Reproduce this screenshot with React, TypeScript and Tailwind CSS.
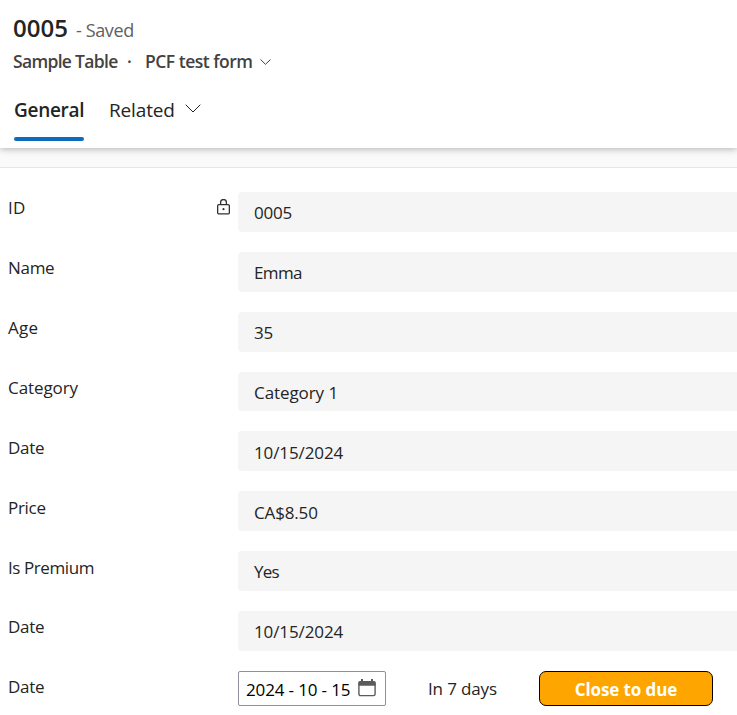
import React from "react";

type Field = { label: string; value: string; locked?: boolean; labelClass: string; valueClass: string };

const fields: Field[] = [
  { label: "ID", value: "0005", locked: true, labelClass: "tracking-[0.2px]", valueClass: "tracking-[-0.25px]" },
  { label: "Name", value: "Emma", labelClass: "tracking-[-0.3px]", valueClass: "tracking-[-0.6px]" },
  { label: "Age", value: "35", labelClass: "tracking-[0.2px]", valueClass: "tracking-[-0.25px]" },
  { label: "Category", value: "Category 1", labelClass: "tracking-[-0.08px]", valueClass: "tracking-[-0.08px]" },
  { label: "Date", value: "10/15/2024", labelClass: "tracking-[-0.3px]", valueClass: "tracking-[-0.1px]" },
  { label: "Price", value: "CA$8.50", labelClass: "tracking-[-0.3px]", valueClass: "tracking-[-0.15px]" },
  { label: "Is Premium", value: "Yes", labelClass: "tracking-[-0.42px]", valueClass: "tracking-[-0.8px]" },
  { label: "Date", value: "10/15/2024", labelClass: "tracking-[-0.3px]", valueClass: "tracking-[-0.1px]" },
];

function Chevron({ className }: { className: string }) {
  return (
    <svg className={className} viewBox="0 0 16 9" fill="none" stroke="currentColor" preserveAspectRatio="none">
      <path d="M0.7 0.7 8 8 15.3 0.7" vectorEffect="non-scaling-stroke" strokeWidth="1" />
    </svg>
  );
}

function LockIcon() {
  return (
    <svg className="mb-[2px] h-4 w-[13px]" viewBox="0 0 13 16" fill="none" stroke="#333" strokeWidth="1.3">
      <rect x="0.65" y="5.65" width="11.7" height="9.2" rx="1.2" />
      <path d="M3.6 5.6V3.5a2.9 2.9 0 0 1 5.8 0v2.1" />
      <circle cx="6.5" cy="10.2" r="1.1" fill="#333" stroke="none" />
    </svg>
  );
}

function CalendarIcon() {
  return (
    <svg className="h-[18px] w-[18px]" viewBox="0 0 18 18" fill="none">
      <rect x="0.9" y="3" width="16.2" height="13.6" rx="1.5" stroke="#5c5c5c" strokeWidth="1.4" />
      <path d="M0.4 6.8V3.6Q.4 2 2 2H3V0H5V2H13V0H15V2H16Q17.6 2 17.6 3.6V6.8Z" fill="#5c5c5c" />
    </svg>
  );
}

export default function App() {
  return (
    <div className="h-[715px] w-[737px] overflow-hidden bg-white font-['Open_Sans',sans-serif] text-[17px] text-[#242424]">
      <header className="relative h-[148px] bg-white shadow-[0_1px_7px_rgba(0,0,0,0.3)]">
        <div className="flex h-[48px] items-baseline pl-[13px] pt-[11px] leading-[34px]">
          <h1 className="text-[24px] font-semibold tracking-[0.05px]">0005</h1>
          <span className="ml-[8px] text-[18px] tracking-[-0.4px] text-[#616161]">- Saved</span>
        </div>
        <div className="flex h-[26px] items-center pl-[13px] text-[17.5px] font-semibold text-[#424242]">
          <span className="w-[105px] whitespace-nowrap tracking-[-0.68px]">Sample Table</span>
          <span className="ml-[9px] w-[5px]">·</span>
          <span className="ml-[13px] w-[108px] whitespace-nowrap tracking-[-0.5px]">PCF test form</span>
          <Chevron className="ml-[7px] mt-[2px] h-[6px] w-[11px]" />
        </div>
        <nav className="flex pl-[14px] pt-[20px] text-[19px] leading-[32px]">
          <div className="flex h-[47px] w-[70px] flex-col justify-between">
            <span className="font-semibold tracking-[-0.3px]">General</span>
            <span className="h-1 rounded-full bg-[#0f6cbd]" />
          </div>
          <div className="ml-[25px] flex h-8 items-center">
            <span className="tracking-[-0.15px]">Related</span>
            <Chevron className="mb-[3px] ml-[10.4px] h-[9px] w-[16px]" />
          </div>
        </nav>
      </header>
      <div className="h-5 border-b border-[#e6e6e6] bg-[#fafafa]" />
      <main className="pt-[23.95px]">
        {fields.map((f, i) => (
          <div key={i} className="flex h-[59.87px] items-start">
            <div className="flex w-[238px] items-center justify-between pl-2 pr-2 pt-[4.42px]">
              <span className={`leading-6 ${f.labelClass}`}>{f.label}</span>
              {f.locked && <LockIcon />}
            </div>
            <div className="h-[39.85px] flex-1 rounded-l bg-[#f5f5f5] pl-4 pt-[9.3px]">
              <span className={`block leading-6 ${f.valueClass}`}>{f.value}</span>
            </div>
          </div>
        ))}
        <div className="flex items-start">
          <div className="w-[238px] pl-2 pt-[4px] leading-6 tracking-[-0.3px]">Date</div>
          <div className="flex h-[35px] w-[148px] items-center justify-between rounded-[2px] border border-[#8f8f9d] pl-[7px] pr-[9px] text-black">
            <span className="pt-[2px] tracking-[-0.15px]">2024 - 10 - 15</span>
            <CalendarIcon />
          </div>
          <span className="ml-[42px] w-[111px] pt-[6px] leading-6 tracking-[-0.15px]">In 7 days</span>
          <button className="h-[35px] w-[174px] rounded-[7px] border border-black bg-[#ffa500] pt-[3px] font-bold leading-6 tracking-[-0.12px] text-white">
            Close to due
          </button>
        </div>
      </main>
    </div>
  );
}
